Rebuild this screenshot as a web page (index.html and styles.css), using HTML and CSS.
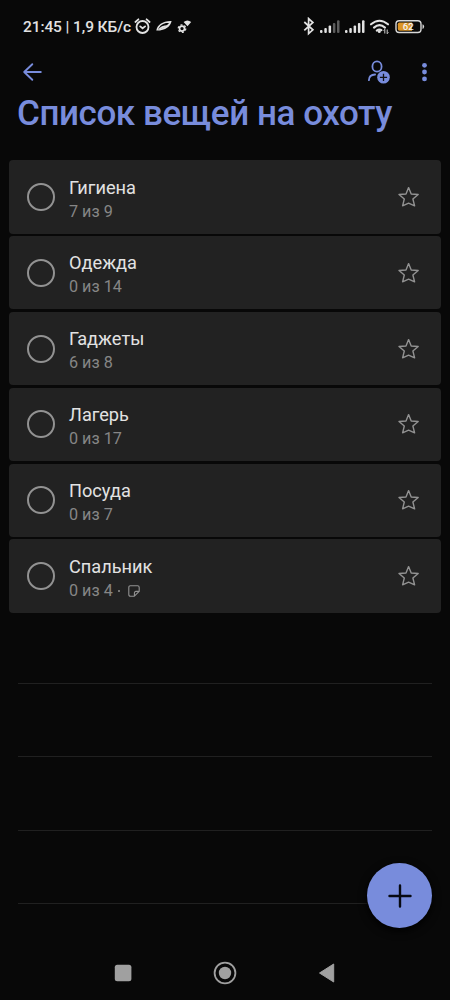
FILE: index.html
```
<!DOCTYPE html>
<html lang="ru">
<head>
<meta charset="utf-8">
<title>Список вещей на охоту</title>
<link rel="stylesheet" href="styles.css">
</head>
<body>
<div class="screen">
  <div class="status">
    <span class="clock">21:45 | 1,9 КБ/с</span>
    <svg class="status-left" width="60" height="20" viewBox="134 17 60 20">
      <g fill="none" stroke="#e2e2e2" stroke-width="1.8" stroke-linecap="round">
        <circle cx="142.5" cy="27" r="6"/>
        <path d="M140.2 26.4l2.4 1.9 2.5-1.9M135.4 22l3-2.7M149.6 22l-3-2.7"/>
      </g>
      <path fill="#e2e2e2" fill-rule="evenodd" d="M156.3 30.6C157 25 163 20.6 171.6 21C170.5 26.5 165.5 30.8 156.3 30.6ZM158.2 29.4C161.5 29 166 26.6 169 23.2C164.8 22.4 160 24.8 158.2 29.4Z"/>
      <path fill="#e2e2e2" d="M158 29.6C160 26.6 163.5 25.4 167.5 25.3C165 27.6 162 29.2 158 29.6Z"/>
      <circle cx="182" cy="28.6" r="2.5" fill="none" stroke="#e2e2e2" stroke-width="1.7"/>
      <circle cx="182" cy="28.6" r="3.8" fill="none" stroke="#e2e2e2" stroke-width="1.2" stroke-dasharray="2 1.98"/>
      <path fill="#e2e2e2" d="M183.6 22Q187.4 19 191.2 22L187.5 26.2Z"/>
    </svg>
    <svg class="status-right" width="124" height="20" viewBox="302 17 124 20">
      <path fill="none" stroke="#e2e2e2" stroke-width="1.7" d="M304.3 22l8.6 7.8-4.3 3.9V18.6l4.3 3.9-8.6 7.8"/>
      <g fill="#e2e2e2">
        <rect x="320" y="30" width="2.5" height="3" rx="1"/><rect x="324.3" y="28" width="2.5" height="5" rx="1"/><rect x="328.6" y="25.5" width="2.5" height="7.5" rx="1"/>
        <rect x="345" y="30" width="2.5" height="3" rx="1"/><rect x="349.3" y="28" width="2.5" height="5" rx="1"/><rect x="353.6" y="25.5" width="2.5" height="7.5" rx="1"/><rect x="357.9" y="23" width="2.5" height="10" rx="1"/><rect x="362" y="20.3" width="2.5" height="12.7" rx="1"/>
      </g>
      <g fill="#5c5c5c"><rect x="332.9" y="23" width="2.5" height="10" rx="1"/><rect x="337" y="20.3" width="2.5" height="12.7" rx="1"/></g>
      <g fill="none" stroke="#e2e2e2" stroke-width="2.1" stroke-linecap="round">
        <path d="M371 24.3Q379.5 17.2 388 24.3M374 27.6Q379.5 22.8 385 27.6M376.8 30.6Q379.3 28.6 381.4 30.2"/>
      </g>
      <circle cx="379.3" cy="31.6" r="1.5" fill="#e2e2e2"/>
      <path fill="none" stroke="#cfcfcf" d="M384.8 33.5v-4.2l-1.2 1.3M387.2 29.5v4.2l1.2-1.3"/>
      <rect x="396" y="20.7" width="25" height="11.8" rx="3.2" fill="none" stroke="#d8d8d8" stroke-width="1.4"/>
      <path fill="#dc9526" d="M399.5 22.4H412V30.8H399.5Q397.8 30.8 397.8 29V24.2Q397.8 22.4 399.5 22.4Z"/>
      <path fill="#d8d8d8" d="M422.5 24.3q1.6.2 1.6 2.3t-1.6 2.3Z"/>
      <text class="battery-text" x="408.2" y="30.2" text-anchor="middle">62</text>
    </svg>
  </div>

  <header class="toolbar">
    <svg class="back" width="20" height="20" viewBox="22 62 20 20" fill="none" stroke="#788cdc" stroke-width="1.9" stroke-linecap="round" stroke-linejoin="round"><path d="M40.8 72H24.2M32.3 64.2L24.2 72l8.1 7.8"/></svg>
    <svg class="share" width="24" height="26" viewBox="367 60 24 26">
      <g fill="none" stroke="#788cdc" stroke-width="1.8" stroke-linecap="round"><ellipse cx="377" cy="66.5" rx="4.6" ry="5.2"/><path d="M368.9 80.2q.1-5.4 6.2-5.7"/></g>
      <circle cx="383.5" cy="77.3" r="6.3" fill="#788cdc"/><path d="M383.5 73.7v7.2M379.9 77.3h7.2" stroke="#101114" stroke-width="1.3"/>
    </svg>
    <svg class="more" width="8" height="22" viewBox="420 61 8 22" fill="#788cdc"><circle cx="424.5" cy="65.3" r="2.4"/><circle cx="424.5" cy="72" r="2.4"/><circle cx="424.5" cy="78.9" r="2.4"/></svg>
  </header>
  <h1 class="title">Список вещей на охоту</h1>

  <svg class="symbols" width="0" height="0"><symbol id="star" viewBox="0 0 22 22"><path fill="none" stroke="#929292" stroke-width="1.4" stroke-linejoin="round" d="M10.6 1.6L13.2 8 20.2 8.5 14.9 13 16.6 19.8 10.6 17.2 4.6 19.8 6.3 13 1 8.5 8 8Z"/></symbol></svg>
  <main class="tasks">
    <div class="task"><i class="check"></i><div class="info"><div class="name">Гигиена</div><div class="meta">7 из 9</div></div><svg class="star"><use href="#star"/></svg></div>
    <div class="task"><i class="check"></i><div class="info"><div class="name">Одежда</div><div class="meta">0 из 14</div></div><svg class="star"><use href="#star"/></svg></div>
    <div class="task"><i class="check"></i><div class="info"><div class="name">Гаджеты</div><div class="meta">6 из 8</div></div><svg class="star"><use href="#star"/></svg></div>
    <div class="task"><i class="check"></i><div class="info"><div class="name">Лагерь</div><div class="meta">0 из 17</div></div><svg class="star"><use href="#star"/></svg></div>
    <div class="task"><i class="check"></i><div class="info"><div class="name">Посуда</div><div class="meta">0 из 7</div></div><svg class="star"><use href="#star"/></svg></div>
    <div class="task"><i class="check"></i><div class="info"><div class="name">Спальник</div><div class="meta">0 из 4<span class="dot"></span><svg class="note" width="12" height="12" viewBox="0 0 12 12" fill="none" stroke="#929292" stroke-width="1.1" stroke-linejoin="round"><path d="M2.4.8H9.6Q11.2.8 11.2 2.4V6.4L6.4 11.2H2.4Q.8 11.2.8 9.6V2.4Q.8.8 2.4.8ZM11.2 6.4H8Q6.4 6.4 6.4 8V11.2"/></svg></div></div><svg class="star"><use href="#star"/></svg></div>
  </main>
  <div class="lines"><div class="line"></div><div class="line"></div><div class="line"></div><div class="line"></div></div>

  <nav class="navbar">
    <svg width="18" height="24" viewBox="0 0 18 24"><rect x=".8" y="3.8" width="16.6" height="16.4" rx="2.5" fill="#a0a0a0"/></svg>
    <svg width="24" height="24" viewBox="0 0 24 24"><circle cx="12" cy="12" r="10.4" fill="none" stroke="#a0a0a0" stroke-width="1.8"/><circle cx="12" cy="12" r="6.2" fill="#a0a0a0"/></svg>
    <svg width="18" height="24" viewBox="0 0 18 24"><path d="M1.5 12L15.7 3V21Z" fill="#a0a0a0" stroke="#a0a0a0" stroke-linejoin="round"/></svg>
  </nav>
  <div class="fab"><svg width="26" height="26" viewBox="0 0 26 26" stroke="#080a12" stroke-width="2.4" stroke-linecap="round"><path d="M13 2.5v21M2.5 13h21"/></svg></div>
</div>
</body>
</html>
```
FILE: styles.css
```
body { margin: 0; background: #080808; font-family: Roboto, "Noto Sans", sans-serif; }
.screen { position: relative; display: flex; flex-direction: column; width: 450px; height: 1000px; overflow: hidden; background: #080808; }
.symbols { display: block; height: 0; flex: none; }
.status { display: flex; flex: none; height: 20px; padding: 17px 24px 0 23px; align-items: center; }
.clock { width: 111px; white-space: nowrap; color: #e2e2e2; font-size: 15.5px; font-weight: 500; line-height: 20px; letter-spacing: -0.1px; }
.status-left { flex: none; }
.status-right { flex: none; margin-left: auto; }
.battery-text { font: 500 9.5px Roboto, sans-serif; fill: #f4f4f4; }
.toolbar { display: flex; flex: none; align-items: center; height: 26px; margin-top: 23px; padding: 0 22px; }
.back { margin-top: -2px; }
.share { margin-left: auto; }
.more { margin: -2px 0 0 29px; }
.title { flex: none; margin: 5px 0 0 17px; height: 46px; line-height: 46px; color: #788cdc; font-size: 35px; font-weight: 500; letter-spacing: -0.42px; white-space: nowrap; }
.tasks { display: flex; flex: none; flex-direction: column; gap: 2.6px; margin: 23.45px 9px 0; }
.task { display: flex; align-items: center; box-sizing: border-box; height: 73.2px; padding: 0 21px 0 18px; border-radius: 4px; background: #222; }
.check { box-sizing: border-box; flex: none; width: 28px; height: 28px; border: 2px solid #929292; border-radius: 50%; }
.info { flex: 1; margin-left: 14px; padding-top: 4.2px; }
.name { color: #e2e2e2; font-size: 18.2px; line-height: 24px; white-space: nowrap; }
.meta { display: flex; align-items: center; color: #868686; font-size: 16.2px; line-height: 23px; white-space: nowrap; }
.dot { width: 2px; height: 2px; margin: 1px 0 0 5px; border-radius: 50%; background: #929292; }
.note { margin: 2px 0 0 8px; }
.star { flex: none; width: 22px; height: 22px; }
.lines { display: flex; flex: none; flex-direction: column; gap: 72.4px; margin: 70.45px 18px 0; }
.line { height: 1px; background: #202020; }
.navbar { display: flex; justify-content: space-between; box-sizing: border-box; width: 222px; height: 39px; margin: auto 0 0 114px; }
.fab { position: absolute; left: 367px; top: 863px; display: flex; align-items: center; justify-content: center; width: 65px; height: 65px; border-radius: 50%; background: #788cdc; box-shadow: 0 3px 8px #000; }
```
